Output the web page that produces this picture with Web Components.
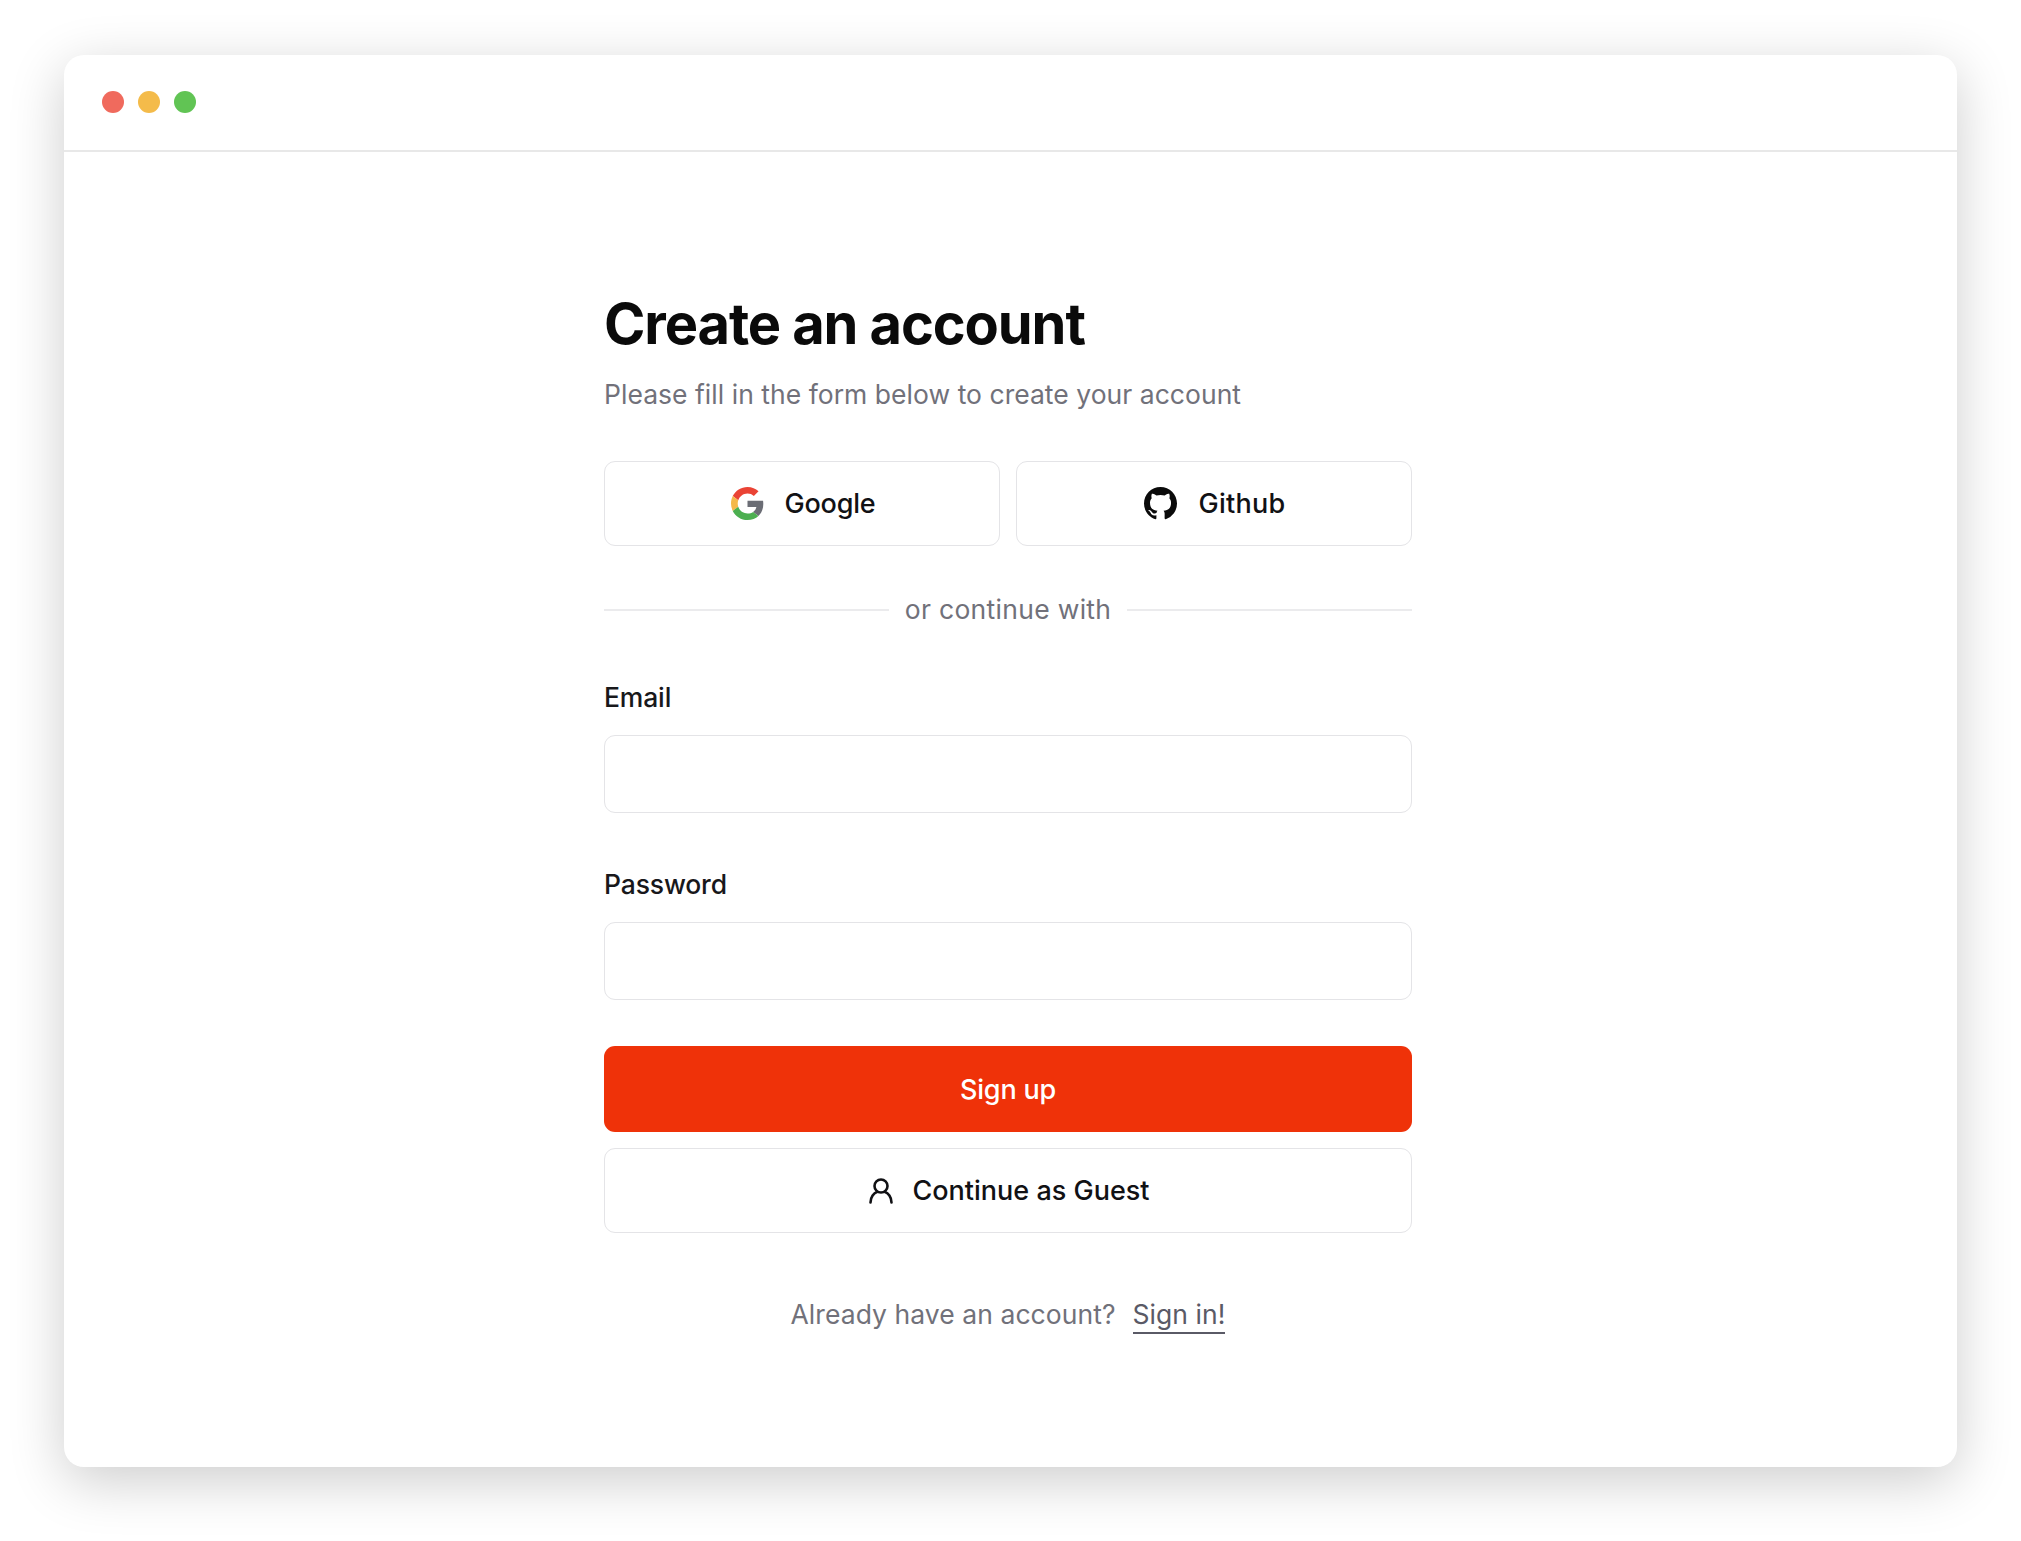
<!DOCTYPE html>
<html>
<head>
<meta charset="utf-8">
<title>Create an account</title>
<style>
  html, body { margin:0; background:#fff; }
  body {
    box-sizing:border-box;
    height:1541px;
    padding:55px 0 0 64px;
    overflow:hidden;
    font-family:Inter, "Liberation Sans", sans-serif;
  }
</style>
</head>
<body>
<app-window>
  <signup-form></signup-form>
</app-window>
<script>
class AppWindow extends HTMLElement {
  constructor() {
    super();
    let shadowRoot = this.attachShadow({mode:"open"});
    shadowRoot.innerHTML = `
      <style>
        :host {
          display:block;
          width:1893px;
          height:1412px;
          background:#fff;
          border-radius:20px;
          box-shadow:0 14px 55px rgba(0,0,0,.2);
        }
        .bar {
          height:95px;
          border-bottom:2px solid #e8e8e8;
          display:flex;
          align-items:center;
          gap:14px;
          padding-left:38px;
        }
        .dot { width:22px; height:22px; border-radius:50%; margin-top:-1px; }
        .main { display:flex; justify-content:center; padding-right:5px; }
      </style>
      <div class="bar">
        <span class="dot" style="background:#f06a5d"></span>
        <span class="dot" style="background:#f4bb4a"></span>
        <span class="dot" style="background:#61c454"></span>
      </div>
      <div class="main"><slot></slot></div>
    `;
  }
}
customElements.define('app-window',AppWindow);

class OutlineButton extends HTMLElement {
  constructor() {
    super();
    let shadowRoot = this.attachShadow({mode:"open"});
    shadowRoot.innerHTML = `
      <style>
        :host {
          display:flex;
          flex:1;
          align-items:center;
          justify-content:center;
          box-sizing:border-box;
          height:85px;
          padding-left:2px;
          gap:var(--gap, 21px);
          border:1.5px solid #e4e4e7;
          border-radius:11px;
          background:#fff;
          color:#111114;
          font:450 27px/1 Inter, "Liberation Sans", sans-serif;
          letter-spacing:var(--track, -.2px);
        }
        ::slotted(svg) { display:block; flex:none; }
      </style>
      <slot name="icon"></slot>
      <span><slot></slot></span>
    `;
  }
}
customElements.define('outline-button',OutlineButton);

class FormField extends HTMLElement {
  constructor() {
    super();
    let shadowRoot = this.attachShadow({mode:"open"});
    shadowRoot.innerHTML = `
      <style>
        :host { display:block; }
        label {
          display:block;
          font:450 26.5px/32px Inter, "Liberation Sans", sans-serif;
          letter-spacing:-.15px;
          color:#18181b;
          margin-bottom:22px;
        }
        input {
          display:block;
          box-sizing:border-box;
          width:100%;
          height:78px;
          border:1.5px solid #e4e4e7;
          border-radius:11px;
          background:#fff;
          outline:none;
        }
      </style>
      <label>${this.getAttribute('label')}</label>
      <input type="${this.getAttribute('type')}">
    `;
  }
}
customElements.define('form-field',FormField);

class SignupForm extends HTMLElement {
  constructor() {
    super();
    let shadowRoot = this.attachShadow({mode:"open"});
    shadowRoot.innerHTML = `
      <style>
        :host {
          display:block;
          width:808px;
          padding-top:140px;
          color:#71717a;
          font-family:Inter, "Liberation Sans", sans-serif;
        }
        h1 {
          margin:0;
          font:700 56px/64px Inter, "Liberation Sans", sans-serif;
          letter-spacing:-1.1px;
          color:#0a0a0a;
        }
        p {
          margin:0;
          font:400 26.5px/32px Inter, "Liberation Sans", sans-serif;
        }
        .sub { margin-top:22px; letter-spacing:.03px; }
        .social { display:flex; gap:16px; margin-top:51px; }
        .divider {
          display:flex;
          align-items:center;
          gap:16px;
          margin-top:47px;
          font:400 26.5px/32px Inter, "Liberation Sans", sans-serif;
          letter-spacing:.3px;
        }
        .divider span { padding-bottom:2px; }
        .divider i { flex:1; height:2px; background:#ebebed; }
        .divider + form-field { margin-top:54px; }
        form-field + form-field { margin-top:55px; }
        .submit {
          display:flex;
          align-items:center;
          justify-content:center;
          height:86px;
          margin-top:46px;
          border-radius:11px;
          background:#ef3209;
          color:#fff;
          font:450 27px/1 Inter, "Liberation Sans", sans-serif;
          letter-spacing:-.2px;
        }
        .guest { display:flex; margin-top:16px; }
        .foot {
          display:flex;
          justify-content:center;
          gap:17px;
          margin-top:65px;
          letter-spacing:.06px;
        }
        a { color:#5a5a66; text-decoration:none; border-bottom:2px solid #5a5a66; padding-bottom:2px; }
      </style>
      <h1>Create an account</h1>
      <p class="sub">Please fill in the form below to create your account</p>
      <div class="social">
        <outline-button>
          <svg slot="icon" width="33" height="33" viewBox="0 0 48 48">
            <path fill="#ea4335" d="M24 9.5c3.54 0 6.71 1.22 9.21 3.6l6.85-6.85C35.9 2.38 30.47 0 24 0 14.62 0 6.51 5.38 2.56 13.22l7.98 6.19C12.43 13.72 17.74 9.5 24 9.5z"/>
            <path fill="#6b6d75" d="M46.98 24.55c0-1.57-.15-3.09-.38-4.55H24v9.02h12.94c-.58 2.96-2.26 5.48-4.78 7.18l7.73 6c4.51-4.18 7.09-10.36 7.09-17.65z"/>
            <path fill="#f4b84a" d="M10.53 28.59c-.48-1.45-.76-2.99-.76-4.59s.27-3.14.76-4.59l-7.98-6.19C.92 16.46 0 20.12 0 24c0 3.88.92 7.54 2.56 10.78l7.97-6.19z"/>
            <path fill="#4caf50" d="M24 48c6.48 0 11.93-2.13 15.89-5.81l-7.73-6c-2.15 1.45-4.92 2.3-8.16 2.3-6.26 0-11.57-4.22-13.47-9.91l-7.98 6.19C6.51 42.62 14.62 48 24 48z"/>
          </svg>
          Google
        </outline-button>
        <outline-button style="--track:.3px">
          <svg slot="icon" width="33" height="33" viewBox="0 0 16 16">
            <path fill="#0a0a0a" d="M8 0C3.58 0 0 3.58 0 8c0 3.54 2.29 6.53 5.47 7.59.4.07.55-.17.55-.38 0-.19-.01-.82-.01-1.49-2.01.37-2.53-.49-2.69-.94-.09-.23-.48-.94-.82-1.13-.28-.15-.68-.52-.01-.53.63-.01 1.08.58 1.23.82.72 1.21 1.87.87 2.33.66.07-.52.28-.87.51-1.07-1.78-.2-3.64-.89-3.64-3.95 0-.87.31-1.59.82-2.15-.08-.2-.36-1.02.08-2.12 0 0 .67-.21 2.2.82.64-.18 1.32-.27 2-.27.68 0 1.36.09 2 .27 1.53-1.04 2.2-.82 2.2-.82.44 1.1.16 1.92.08 2.12.51.56.82 1.27.82 2.15 0 3.07-1.87 3.75-3.65 3.95.29.25.54.73.54 1.48 0 1.07-.01 1.93-.01 2.2 0 .21.15.46.55.38A8.013 8.013 0 0016 8c0-4.42-3.58-8-8-8z"/>
          </svg>
          Github
        </outline-button>
      </div>
      <div class="divider"><i></i><span>or continue with</span><i></i></div>
      <form-field label="Email" type="email"></form-field>
      <form-field label="Password" type="password"></form-field>
      <div class="submit">Sign up</div>
      <div class="guest">
        <outline-button style="--gap:20px;--track:0">
          <svg slot="icon" width="24" height="26" viewBox="0 0 24 26" fill="none" stroke="#111114" stroke-width="2.6" stroke-linecap="round">
            <circle cx="12" cy="8" r="6.5"/>
            <path d="M1.5 24.5c0-5.500 3.500-9.500 6.500-10.500M22.500 24.500c0-5.500-3.500-9.500-6.500-10.500"/>
          </svg>
          Continue as Guest
        </outline-button>
      </div>
      <p class="foot"><span>Already have an account?</span><a>Sign in!</a></p>
    `;
  }
}
customElements.define('signup-form',SignupForm);
</script>
</body>
</html>
